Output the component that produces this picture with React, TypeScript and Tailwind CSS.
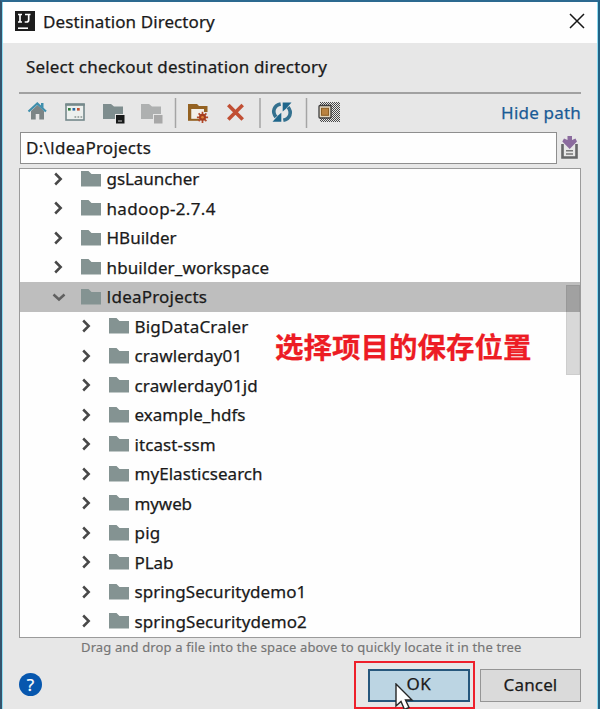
import React from "react";

type Row = { name: string; child?: boolean; open?: boolean; track: string };

const rows: Row[] = [
  { name: "gsLauncher", track: "tracking-[-0.05px]" },
  { name: "hadoop-2.7.4", track: "tracking-[0.33px]" },
  { name: "HBuilder", track: "tracking-[0px]" },
  { name: "hbuilder_workspace", track: "tracking-[0.12px]" },
  { name: "IdeaProjects", open: true, track: "tracking-[0.22px]" },
  { name: "BigDataCraler", child: true, track: "tracking-[0.2px]" },
  { name: "crawlerday01", child: true, track: "tracking-[0.1px]" },
  { name: "crawlerday01jd", child: true, track: "tracking-[0.15px]" },
  { name: "example_hdfs", child: true, track: "tracking-[0.03px]" },
  { name: "itcast-ssm", child: true, track: "tracking-[0.1px]" },
  { name: "myElasticsearch", child: true, track: "tracking-[0.05px]" },
  { name: "myweb", child: true, track: "tracking-[-0.1px]" },
  { name: "pig", child: true, track: "tracking-[0.2px]" },
  { name: "PLab", child: true, track: "tracking-[-0.1px]" },
  { name: "springSecuritydemo1", child: true, track: "tracking-[0.06px]" },
  { name: "springSecuritydemo2", child: true, track: "tracking-[0.09px]" },
];

// Sets the capital I in a face that draws it as a plain stem.
function Label({ text }: { text: string }) {
  const at = text.indexOf("I");
  if (at < 0) return <>{text}</>;
  return (
    <>
      {text.slice(0, at)}
      <span className="font-['Open_Sans',sans-serif]">I</span>
      {text.slice(at + 1)}
    </>
  );
}

function Chevron({ open }: { open?: boolean }) {
  return (
    <svg className="h-4 w-4 shrink-0" viewBox="0 0 16 16" fill="none" stroke={open ? "#606060" : "#484848"} strokeWidth="2.5">
      <path d={open ? "M2.5 5.5 8 10.5 13.5 5.5" : "M4.2 2.5 9.7 8 4.2 13.5"} />
    </svg>
  );
}

function Folder() {
  return (
    <svg className="h-4 w-5 shrink-0" viewBox="0 0 20 16">
      <path d="M0 0H7.5L10.5 3H20V15.5H0Z" fill="#849392" />
    </svg>
  );
}

function TreeRow({ row }: { row: Row }) {
  return (
    <div className={`flex h-[29.53px] shrink-0 items-center ${row.open ? "bg-[#bebebe]" : ""} ${row.child ? "pl-[59px]" : "pl-[31px]"}`}>
      <Chevron open={row.open} />
      <span className="ml-[14px] flex"><Folder /></span>
      <span className={`ml-[5.5px] text-[17px] leading-none whitespace-nowrap ${row.track}`}><Label text={row.name} /></span>
    </div>
  );
}

function Toolbar() {
  return (
    <svg className="h-[34px] w-[330px] shrink-0" viewBox="20 95 330 34" fill="none">
      {/* home */}
      <path d="M31 111 37.5 105 44 111V119.5H39.3V114H35.7V119.5H31Z" fill="#7c8586" />
      <path d="M28.5 111.5 37.3 103.5 46 111.5" stroke="#3f8fad" strokeWidth="2.2" />
      <path d="M41 103H43.5V108L41 106Z" fill="#3f8fad" />
      {/* project */}
      <rect x="66" y="104.5" width="18" height="15.5" fill="#edf0ee" stroke="#75898b" strokeWidth="1.6" />
      <path d="M65.3 104.5H84.8" stroke="#75898b" strokeWidth="2.5" />
      <path d="M68 109.3H70.7" stroke="#2f7c3b" strokeWidth="2.6" />
      <path d="M72.5 109.3H75.2" stroke="#2868a0" strokeWidth="2.6" />
      <path d="M77 109.3H79.7" stroke="#c05030" strokeWidth="2.6" />
      <path d="M74.5 117H82.5" stroke="#8b9491" strokeWidth="1.6" strokeDasharray="1.7 1.3" />
      {/* module */}
      <path d="M103 104H111L114 106.5H123V114H115V119H103Z" fill="#7e8d8e" />
      <rect x="116" y="115" width="8.5" height="8.5" fill="#171919" />
      <path d="M118 121H122" stroke="#aaa" strokeWidth="1.2" />
      {/* disabled module */}
      <path d="M141 104H149L152 106.5H161V114H153V119H141Z" fill="#aeb0b0" />
      <rect x="154" y="115" width="8.5" height="8.5" fill="#a8a8a8" />
      <path d="M175.5 98V128" stroke="#a5a5a5" strokeWidth="1.5" />
      {/* new folder */}
      <path d="M188 104H197L199 106H207.5V112H204V109H191.5V119H188Z" fill="#946222" />
      <path d="M191.5 109H204V112L198 119H191.5Z" fill="#f3efe8" />
      <path d="M188 119.8H199" stroke="#946222" strokeWidth="2" />
      <path d="M202.5 111.7V122.9M196.9 117.3H208.1M198.6 113.4 206.4 121.2M206.4 113.4 198.6 121.2" stroke="#b24a2a" strokeWidth="1.7" />
      <circle cx="202.5" cy="117.3" r="3.5" fill="#a43d20" />
      <circle cx="202.5" cy="117.3" r="1.3" fill="#e18335" />
      {/* delete */}
      <path d="M228.3 105 242.7 119.5M242.7 105 228.3 119.5" stroke="#c14f34" strokeWidth="3.6" />
      <path d="M260 98V128" stroke="#a5a5a5" strokeWidth="1.5" />
      {/* refresh */}
      <path d="M280.7 104C274.3 105.2 271.5 111.5 276 117" stroke="#34718f" strokeWidth="3.6" />
      <path d="M272.5 121.7H281.3V112.8L278.3 115.2Z" fill="#1e668b" />
      <path d="M283.3 120.2C289.7 119 292.5 112.7 288 107.2" stroke="#34718f" strokeWidth="3.6" />
      <path d="M291.5 102.5H282.7V111.4L285.7 109Z" fill="#1e668b" />
      <path d="M306.5 98V128" stroke="#a5a5a5" strokeWidth="1.5" />
      {/* hidden files */}
      <defs>
        <pattern id="check" width="2" height="2" patternUnits="userSpaceOnUse">
          <path d="M0 0H1V1H0ZM1 1H2V2H1Z" fill="#484848" />
        </pattern>
      </defs>
      <rect x="320" y="102" width="20" height="20" fill="url(#check)" />
      <rect x="319" y="105.5" width="12" height="12.5" rx="1" fill="#e2d5bc" stroke="#3f3f3f" strokeWidth="1.3" />
      <rect x="321.5" y="108.3" width="7" height="7" fill="#ba8340" stroke="#8d6026" />
    </svg>
  );
}

export default function App() {
  return (
    <div className="flex h-[709px] w-[600px] flex-col overflow-hidden border-t-2 border-r-2 border-l-2 border-t-[#2c6990] border-r-[#226284] border-l-[#35536c] bg-[#e7e7e7] font-['Noto_Sans','Noto_Sans_CJK_SC',sans-serif] text-[#1a1a1a] [-webkit-text-stroke:0.25px_currentColor]">
      <div className="flex min-h-0 flex-1 flex-col border-r border-l border-[#8edcf2]">
        <header className="flex h-[41px] shrink-0 items-center bg-[#fefefe] pl-3">
          <svg className="-mt-1 h-5 w-5" viewBox="0 0 20 20">
            <rect width="20" height="20" fill="#1c1c1c" />
            <path d="M3 3.5H7M5 3.5V11M3 11H7M10 3.5H15.5M13.7 3.5V8.7Q13.7 11 11.7 11H9.7" fill="none" stroke="#fff" strokeWidth="1.7" />
            <path d="M3 17.2H13" stroke="#fff" strokeWidth="1.6" />
          </svg>
          <h1 className="-mt-[3px] ml-2 text-[17px] leading-none tracking-[0.1px]">Destination Directory</h1>
          <svg className="-mt-1 mr-3 ml-auto h-4 w-4" viewBox="0 0 16 16" fill="none" stroke="#171717" strokeWidth="1.5">
            <path d="M1 1 15 15M15 1 1 15" />
          </svg>
        </header>
        <main className="flex min-h-0 flex-1 flex-col pr-4 pl-4">
          <p className="flex h-12 shrink-0 items-center pb-[2px] pl-[7px] text-[17px] leading-none tracking-[0.18px]">Select checkout destination directory</p>
          <div className="mt-px h-[2px] shrink-0 bg-[#a1a1a1]" />
          <div className="mt-px flex h-[36px] shrink-0 items-center justify-between">
            <div className="-mt-[2px] ml-px flex"><Toolbar /></div>
            <a className="-mt-[2px] text-[17px] leading-none tracking-[0.2px] text-[#1a5b96]">Hide path</a>
          </div>
          <div className="mt-px flex h-[32px] shrink-0 items-center">
            <div className="ml-px flex h-full w-[537px] items-center border border-[#8e8e8e] bg-[#fefefe] pb-px pl-[5px] text-[17px] leading-none tracking-[0.25px]"><span><Label text="D:\IdeaProjects" /></span></div>
            <svg className="ml-[3px] h-6 w-5" viewBox="0 0 20 24" fill="none">
              <path d="M2.5 8V21.5H16.5V8" stroke="#666768" strokeWidth="2.6" />
              <path d="M6 14.7H13M6 18H13" stroke="#777" strokeWidth="1.4" />
              <path d="M7.5 0H12V4L15.5 2.5 17 5.5 9.7 13 2.3 5.5 4 2.5 7.5 4Z" fill="#8b6b9e" />
            </svg>
          </div>
          <section className="relative mt-1 flex h-[470px] shrink-0 flex-col overflow-hidden border border-[#9b9b9b] bg-[#fefefe]">
            <div className="-mt-[5px] flex flex-col">
              {rows.map((row) => <TreeRow key={row.name} row={row} />)}
            </div>
            <div className="absolute top-[116px] right-0 h-[90px] w-[14px] border border-black/5 bg-black/15" />
            <div className="absolute top-[159px] left-[255px] font-['Noto_Sans_CJK_SC',sans-serif] text-[28.5px] leading-9 font-bold whitespace-nowrap text-[#ed1c24]">选择项目的保存位置</div>
          </section>
          <p className="mt-[2px] ml-[62px] h-[15px] shrink-0 text-[13px] leading-[15px] tracking-[0.135px] whitespace-nowrap text-[#757575] [-webkit-text-stroke:0.15px_currentColor]">Drag and drop a file into the space above to quickly locate it in the tree</p>
          <footer className="mt-[6px] flex h-12 shrink-0 items-center">
            <span className="-mt-px flex h-[23px] w-[23px] items-center justify-center rounded-full bg-[#0757ae] text-[17px] leading-none text-white">?</span>
            <div className="relative ml-auto flex h-12 w-[121px] items-center border-2 border-[#ee202b] pl-[12px]">
              <button className="flex h-[33px] w-[102px] shrink-0 items-center justify-center border-2 border-[#26577c] bg-[#bcd5e3] pb-[3px] text-[17px] leading-none tracking-[0.5px]">OK</button>
              <svg className="absolute top-[20px] left-[39px] h-[28px] w-[20px]" viewBox="0 0 20 28">
                <path d="M1 1V23L6 18.5 9.5 26.5 14 24.5 10.5 17H17Z" fill="#fff" stroke="#252525" strokeWidth="1.4" />
              </svg>
            </div>
            <button className="ml-[5px] flex h-[33px] w-[101px] items-center justify-center border border-[#959595] bg-[#dadada] pb-[2px] text-[17px] leading-none tracking-[0.15px]">Cancel</button>
          </footer>
        </main>
      </div>
    </div>
  );
}
